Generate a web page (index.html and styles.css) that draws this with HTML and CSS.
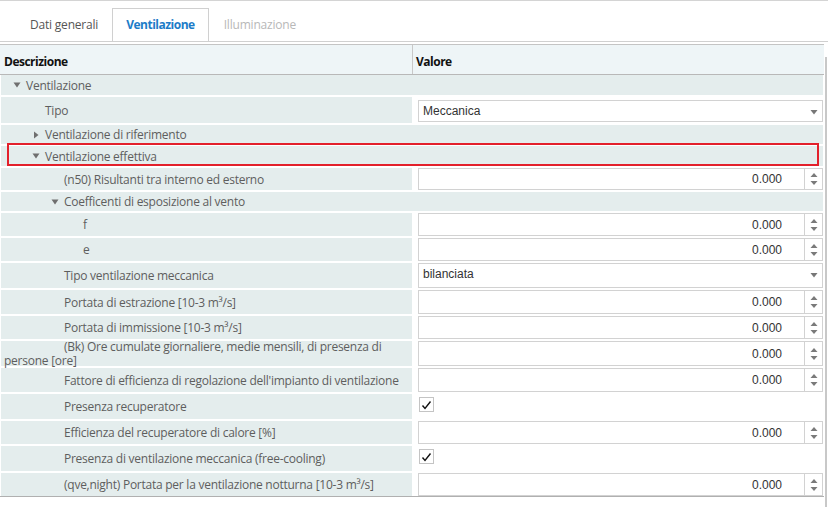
FILE: index.html
```html
<!DOCTYPE html>
<html>
<head>
<meta charset="utf-8">
<link rel="stylesheet" href="styles.css">
</head>
<body>
<div class="page">
  <div class="tabs">
    <div class="tab first">Dati generali</div>
    <div class="tab active">Ventilazione</div>
    <div class="tab disabled">Illuminazione</div>
  </div>
  <div class="pane">
    <div class="grid">
      <div class="head">
        <div class="hcell hdesc">Descrizione</div>
        <div class="hcell hval">Valore</div>
      </div>
      <div class="rows">
        <div class="row grp h20"><div class="lbl g0"><svg class="tri" width="8" height="8" viewBox="0 0 8 8"><path d="M0.5 1.5h7L4 6.5z"/></svg>Ventilazione</div></div>
        <div class="row h26"><div class="lbl i1">Tipo</div><div class="val top3"><div class="combo h22"><span class="ctext">Meccanica</span><svg class="carr" width="8" height="5" viewBox="0 0 8 5"><path d="M0.5 0h7L4 4.5z"/></svg></div></div></div>
        <div class="row grp h19"><div class="lbl g1"><svg class="tri" width="8" height="8" viewBox="0 0 8 8"><path d="M2 0.5v7l4.5-3.5z"/></svg>Ventilazione di riferimento</div></div>
        <div class="row grp h20"><div class="lbl g1"><svg class="tri" width="8" height="8" viewBox="0 0 8 8"><path d="M0.5 1.5h7L4 6.5z"/></svg>Ventilazione effettiva</div></div>
        <div class="row h22"><div class="lbl i2">(n50) Risultanti tra interno ed esterno</div><div class="val"><div class="num"><span class="ntext">0.000</span><div class="spin"><svg width="8" height="14" viewBox="0 0 8 14"><path d="M4 1l3.5 4H0.5z M0.5 9h7L4 13z"/></svg></div></div></div></div>
        <div class="row grp h19"><div class="lbl g2"><svg class="tri" width="8" height="8" viewBox="0 0 8 8"><path d="M0.5 1.5h7L4 6.5z"/></svg>Coefficenti di esposizione al vento</div></div>
        <div class="row h23"><div class="lbl i3">f</div><div class="val"><div class="num"><span class="ntext">0.000</span><div class="spin"><svg width="8" height="14" viewBox="0 0 8 14"><path d="M4 1l3.5 4H0.5z M0.5 9h7L4 13z"/></svg></div></div></div></div>
        <div class="row h23"><div class="lbl i3">e</div><div class="val"><div class="num"><span class="ntext">0.000</span><div class="spin"><svg width="8" height="14" viewBox="0 0 8 14"><path d="M4 1l3.5 4H0.5z M0.5 9h7L4 13z"/></svg></div></div></div></div>
        <div class="row h25"><div class="lbl i2">Tipo ventilazione meccanica</div><div class="val"><div class="combo"><span class="ctext">bilanciata</span><svg class="carr" width="8" height="5" viewBox="0 0 8 5"><path d="M0.5 0h7L4 4.5z"/></svg></div></div></div>
        <div class="row h24"><div class="lbl i2">Portata di estrazione [10-3 m³/s]</div><div class="val"><div class="num"><span class="ntext">0.000</span><div class="spin"><svg width="8" height="14" viewBox="0 0 8 14"><path d="M4 1l3.5 4H0.5z M0.5 9h7L4 13z"/></svg></div></div></div></div>
        <div class="row h23"><div class="lbl i2">Portata di immissione [10-3 m³/s]</div><div class="val"><div class="num"><span class="ntext">0.000</span><div class="spin"><svg width="8" height="14" viewBox="0 0 8 14"><path d="M4 1l3.5 4H0.5z M0.5 9h7L4 13z"/></svg></div></div></div></div>
        <div class="row h25"><div class="lbl wrapcell"><span class="wrap">(Bk) Ore cumulate giornaliere, medie mensili, di presenza di persone [ore]</span></div><div class="val"><div class="num"><span class="ntext">0.000</span><div class="spin"><svg width="8" height="14" viewBox="0 0 8 14"><path d="M4 1l3.5 4H0.5z M0.5 9h7L4 13z"/></svg></div></div></div></div>
        <div class="row h24"><div class="lbl i2">Fattore di efficienza di regolazione dell'impianto di ventilazione</div><div class="val"><div class="num"><span class="ntext">0.000</span><div class="spin"><svg width="8" height="14" viewBox="0 0 8 14"><path d="M4 1l3.5 4H0.5z M0.5 9h7L4 13z"/></svg></div></div></div></div>
        <div class="row h25"><div class="lbl i2">Presenza recuperatore</div><div class="val plain"><div class="chk"><svg width="11" height="10" viewBox="0 0 11 10"><path d="M1.5 5.5l2.5 3L9.5 1.5" fill="none" stroke="#111" stroke-width="1.4"/></svg></div></div></div>
        <div class="row h23"><div class="lbl i2">Efficienza del recuperatore di calore [%]</div><div class="val"><div class="num"><span class="ntext">0.000</span><div class="spin"><svg width="8" height="14" viewBox="0 0 8 14"><path d="M4 1l3.5 4H0.5z M0.5 9h7L4 13z"/></svg></div></div></div></div>
        <div class="row h25"><div class="lbl i2">Presenza di ventilazione meccanica (free-cooling)</div><div class="val plain"><div class="chk"><svg width="11" height="10" viewBox="0 0 11 10"><path d="M1.5 5.5l2.5 3L9.5 1.5" fill="none" stroke="#111" stroke-width="1.4"/></svg></div></div></div>
        <div class="row h23"><div class="lbl i2">(qve,night) Portata per la ventilazione notturna [10-3 m³/s]</div><div class="val"><div class="num"><span class="ntext">0.000</span><div class="spin"><svg width="8" height="14" viewBox="0 0 8 14"><path d="M4 1l3.5 4H0.5z M0.5 9h7L4 13z"/></svg></div></div></div></div>
      </div>
      <div class="highlight"></div>
    </div>
    <div class="vscroll"><div class="thumb"></div></div>
  </div>
</div>
</body>
</html>
```
FILE: styles.css
```css
* { box-sizing: border-box; }
html, body { margin: 0; padding: 0; background: #fff; }
body {
  font-family: "Open Sans", "Noto Sans", sans-serif;
  font-size: 12px;
  color: #5e5e5e;
  width: 828px;
  height: 507px;
  overflow: hidden;
}
.page { border-top: 1px solid #d4d4d4; }
.tabs {
  display: flex;
  padding-left: 14px;
  height: 41px;
  border-bottom: 1px solid #d0d0d0;
  align-items: flex-end;
}
.tab {
  height: 33px;
  padding: 0 15px 1px;
  display: flex;
  align-items: center;
  color: #555;
  border: 1px solid transparent;
  border-bottom: none;
  letter-spacing: -0.2px;
}
.tab.first { padding: 0 13px 1px 15px; }
.tab.active {
  color: #1c7cc8;
  font-weight: bold;
  border-color: #d0d0d0;
  padding: 0 13px 1px;
  letter-spacing: -0.5px;
}
.tab.disabled { color: #b8b8b8; padding-left: 14px; }
.pane {
  display: flex;
  margin-top: 2px;
}
.grid {
  width: 824px;
  position: relative;
}
.head {
  display: grid;
  grid-template-columns: 413px 1fr;
  height: 31px;
  background: #eef5f7;
  border-top: 1px solid #c4c4c4;
  border-bottom: 1px solid #b8b8b8;
}
.hcell {
  display: flex;
  align-items: center;
  font-weight: bold;
  color: #111;
  padding: 4px 0 0 4px;
  letter-spacing: -0.5px;
}
.hdesc { border-right: 1px solid #c8c8c8; }
.hval { padding-left: 3px; }
.rows {
  display: flex;
  flex-direction: column;
  gap: 2px;
  padding-left: 1px;
  padding-right: 1px;
  border-bottom: 1px solid #b0b0b0;
}
.row {
  display: grid;
  grid-template-columns: 411px 1fr;
  grid-template-rows: minmax(0, 1fr);
  column-gap: 6px;
}
.row.grp { grid-template-columns: 1fr; background: #e4eded; }
.h19 { height: 19px; }
.h20 { height: 20px; }
.h22 { height: 22px; }
.h23 { height: 23px; }
.h24 { height: 24px; }
.h25 { height: 25px; }
.h26 { height: 26px; }
.lbl {
  background: #e4eded;
  padding-left: 3px;
  display: flex;
  align-items: center;
  white-space: nowrap;
  letter-spacing: -0.25px;
  min-height: 0;
}
.wrap {
  white-space: normal;
  line-height: 14px;
  text-indent: 60px;
  padding-right: 20px;
  margin-top: 1px;
}
.row.grp .lbl { background: transparent; }
.i1 { padding-left: 44px; }
.i2 { padding-left: 63px; }
.i3 { padding-left: 82px; }
.g0 { padding-left: 12px; }
.g1 { padding-left: 31px; }
.g2 { padding-left: 50px; }
.tri { fill: #6f6f6f; margin-right: 5px; flex: none; }
.val { display: flex; flex-direction: column; min-height: 0; }
.val.top3 { padding-top: 3px; }
.combo, .num {
  flex: 1;
  border: 1px solid #d2d2d2;
  background: #fff;
  display: flex;
  color: #333;
  font-family: "Liberation Sans", Arial, sans-serif;
  font-size: 12px;
}
.combo.h22 { flex: none; height: 22px; }
.combo { justify-content: space-between; align-items: flex-start; }
.ctext { padding: 3px 0 0 4px; }
.carr { fill: #777; margin: 9px 4px 0 0; }
.num { align-items: center; }
.ntext { flex: 1; text-align: right; padding-right: 22px; }
.spin {
  width: 18px;
  align-self: stretch;
  border-left: 1px solid #d2d2d2;
  display: flex;
  align-items: center;
  justify-content: center;
}
.spin svg { fill: #7a7a7a; }
.val.plain { justify-content: flex-start; }
.chk {
  width: 15px;
  height: 15px;
  border: 1px solid #c4c4c4;
  margin: 3px 0 0 1px;
  display: flex;
  align-items: center;
  justify-content: center;
}
.highlight {
  position: absolute;
  left: 7px;
  top: 99px;
  width: 812px;
  height: 23px;
  border: 2px solid #e3202b;
}
.vscroll {
  width: 4px;
  padding-top: 13px;
}
.thumb {
  margin-left: 1px;
  width: 2px;
  height: 460px;
  background: #c8c8c8;
}
```
